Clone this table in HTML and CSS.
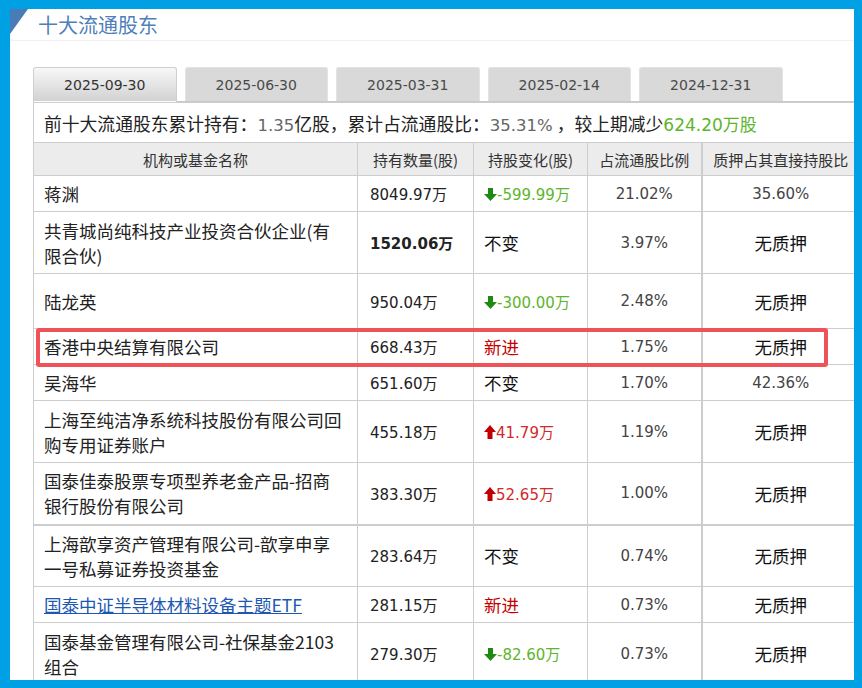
FILE: index.html
```html
<!DOCTYPE html>
<html lang="zh-CN">
<head>
<meta charset="utf-8">
<title>十大流通股东</title>
<link rel="stylesheet" href="styles.css">
</head>
<body>
<div class="panel">
  <div class="title-bar">
    <span class="corner"></span>
    <h2 class="title">十大流通股东</h2>
  </div>
  <div class="tabs">
    <div class="tab active">2025-09-30</div>
    <div class="tab">2025-06-30</div>
    <div class="tab">2025-03-31</div>
    <div class="tab">2025-02-14</div>
    <div class="tab">2024-12-31</div>
  </div>
  <table class="holders">
    <colgroup>
      <col class="c-name"><col class="c-hold"><col class="c-chg"><col class="c-ratio"><col class="c-pledge">
    </colgroup>
    <tr class="summary">
      <td colspan="5">前十大流通股东累计持有：<span class="grey">1.35</span>亿股，累计占流通股比：<span class="grey">35.31%</span> ，较上期减少<span class="green">624.20万股</span></td>
    </tr>
    <tr class="head">
      <th>机构或基金名称</th><th>持有数量(股)</th><th>持股变化(股)</th><th>占流通股比例</th><th class="pl">质押占其直接持股比</th>
    </tr>
    <tr class="one first">
      <td class="name">蒋渊</td>
      <td class="num">8049.97万</td>
      <td class="chg down"><svg class="arr" viewBox="0 0 13 13" width="13" height="13"><path d="M4 0H9V6H13L6.5 13L0 6H4Z"/></svg>-599.99万</td>
      <td class="ratio">21.02%</td>
      <td class="pl ratio">35.60%</td>
    </tr>
    <tr class="two">
      <td class="name">共青城尚纯科技产业投资合伙企业(有<br>限合伙)</td>
      <td class="num bold">1520.06万</td>
      <td class="chg">不变</td>
      <td class="ratio">3.97%</td>
      <td class="pl none">无质押</td>
    </tr>
    <tr class="tall">
      <td class="name">陆龙英</td>
      <td class="num">950.04万</td>
      <td class="chg down"><svg class="arr" viewBox="0 0 13 13" width="13" height="13"><path d="M4 0H9V6H13L6.5 13L0 6H4Z"/></svg>-300.00万</td>
      <td class="ratio">2.48%</td>
      <td class="pl none">无质押</td>
    </tr>
    <tr class="one">
      <td class="name">香港中央结算有限公司</td>
      <td class="num">668.43万</td>
      <td class="chg new">新进</td>
      <td class="ratio">1.75%</td>
      <td class="pl none">无质押</td>
    </tr>
    <tr class="one">
      <td class="name">吴海华</td>
      <td class="num">651.60万</td>
      <td class="chg">不变</td>
      <td class="ratio">1.70%</td>
      <td class="pl ratio">42.36%</td>
    </tr>
    <tr class="two">
      <td class="name">上海至纯洁净系统科技股份有限公司回<br>购专用证券账户</td>
      <td class="num">455.18万</td>
      <td class="chg up"><svg class="arr" viewBox="0 0 12 14" width="12" height="14"><path d="M6 0L12 7H8.5V14H3.5V7H0Z"/></svg>41.79万</td>
      <td class="ratio">1.19%</td>
      <td class="pl none">无质押</td>
    </tr>
    <tr class="two">
      <td class="name">国泰佳泰股票专项型养老金产品-招商<br>银行股份有限公司</td>
      <td class="num">383.30万</td>
      <td class="chg up"><svg class="arr" viewBox="0 0 12 14" width="12" height="14"><path d="M6 0L12 7H8.5V14H3.5V7H0Z"/></svg>52.65万</td>
      <td class="ratio">1.00%</td>
      <td class="pl none">无质押</td>
    </tr>
    <tr class="two sep">
      <td class="name">上海歆享资产管理有限公司-歆享申享<br>一号私募证券投资基金</td>
      <td class="num">283.64万</td>
      <td class="chg">不变</td>
      <td class="ratio">0.74%</td>
      <td class="pl none">无质押</td>
    </tr>
    <tr class="one">
      <td class="name"><a class="fund" href="#">国泰中证半导体材料设备主题ETF</a></td>
      <td class="num">281.15万</td>
      <td class="chg new">新进</td>
      <td class="ratio">0.73%</td>
      <td class="pl none">无质押</td>
    </tr>
    <tr class="two">
      <td class="name">国泰基金管理有限公司-社保基金2103<br>组合</td>
      <td class="num">279.30万</td>
      <td class="chg down"><svg class="arr" viewBox="0 0 13 13" width="13" height="13"><path d="M4 0H9V6H13L6.5 13L0 6H4Z"/></svg>-82.60万</td>
      <td class="ratio">0.73%</td>
      <td class="pl none">无质押</td>
    </tr>
  </table>
  <div class="highlight"></div>
</div>
</body>
</html>
```
FILE: styles.css
```css
* { box-sizing: border-box; }
html, body { margin: 0; padding: 0; }
body {
  width: 862px;
  height: 688px;
  overflow: hidden;
  background: #00a0e4;
  font-family: "Noto Sans CJK SC", sans-serif;
  color: #222;
}
.panel {
  position: relative;
  margin: 9px 8px 0 10px;
  height: 671px;
  background: #fff;
  overflow: hidden;
}
.title-bar {
  display: flex;
  align-items: center;
  height: 32px;
  border-bottom: 1px solid #f1f1f1;
}
.corner {
  align-self: flex-start;
  width: 0;
  height: 0;
  border-top: 25px solid #4b7bb6;
  border-right: 18px solid transparent;
}
.title {
  margin: 0 0 0 10px;
  font-size: 20px;
  font-weight: normal;
  line-height: 1;
  color: #4f7fba;
}
.tabs {
  display: flex;
  align-items: flex-end;
  gap: 8px;
  margin: 26px 0 0 23px;
  height: 35px;
  border-bottom: 1px solid #c9c9c9;
}
.tab {
  flex: none;
  width: 143.5px;
  height: 34px;
  display: flex;
  align-items: center;
  justify-content: center;
  border: 1px solid #e2e2e2;
  border-bottom: none;
  border-radius: 3px 3px 0 0;
  background: #d9d9d9;
  font: 14px "DejaVu Sans", sans-serif;
  color: #4a4a4a;
}
.tab.active {
  height: 35px;
  margin-bottom: -1px;
  border-color: #cfcfcf;
  background: linear-gradient(#f8f8f8, #d2d2d2 96%, #fff 96%);
  color: #333;
}
.holders {
  width: 826px;
  margin-left: 23px;
  border-collapse: collapse;
  table-layout: fixed;
}
.c-name { width: 324px; }
.c-hold { width: 116px; }
.c-chg { width: 114px; }
.c-ratio { width: 114px; }
.c-pledge { width: 158px; }
.holders td, .holders th {
  border: 1px solid #cdcdcd;
  padding: 0 10px;
  vertical-align: middle;
}
.summary td {
  height: 40px;
  font-size: 17.8px;
  color: #222;
  white-space: nowrap;
}
.grey {
  font-family: "DejaVu Sans", sans-serif;
  font-size: 16.5px;
  color: #666;
}
.green {
  font-family: "DejaVu Sans", "Noto Sans CJK SC", sans-serif;
  font-size: 17px;
  color: #5db52b;
}
.head th {
  height: 33px;
  background: #ececec;
  font-size: 15px;
  font-weight: normal;
  color: #333;
  text-align: center;
  white-space: nowrap;
  padding: 0;
}
.one td { height: 36px; }
.two td { height: 62px; }
.tall td { height: 55px; }
.sep td { border-top: 2px solid #cdcdcd; }
.holders .pl { border-left: 2px solid #cdcdcd; }
.name {
  font-size: 17.5px;
  line-height: 25px;
  color: #222;
}
.fund { color: #1d57b2; text-decoration: underline; }
.num {
  padding-left: 12px !important;
  font: 15px "DejaVu Sans", "Noto Sans CJK SC", sans-serif;
  color: #222;
}
.bold { font-weight: 600; }
.chg {
  padding-left: 10px !important;
  font-size: 17.5px;
  color: #111;
  white-space: nowrap;
}
.chg.down, .chg.up {
  font: 15px "DejaVu Sans", "Noto Sans CJK SC", sans-serif;
}
.chg.down { color: #5db52b; }
.chg.down .arr { fill: #1f8a12; }
.chg.up { color: #d22a2a; }
.chg.up .arr { fill: #c00000; }
.chg.new { color: #c40000; }
.arr { vertical-align: -1px; }
.ratio {
  text-align: center;
  font: 15px "DejaVu Sans", sans-serif;
  color: #444;
}
.none {
  text-align: center;
  font-size: 17.5px;
  color: #111;
}
.highlight {
  position: absolute;
  left: 26px;
  top: 319px;
  width: 792px;
  height: 39px;
  border: 4px solid #ef5258;
  border-radius: 3px;
}
```
